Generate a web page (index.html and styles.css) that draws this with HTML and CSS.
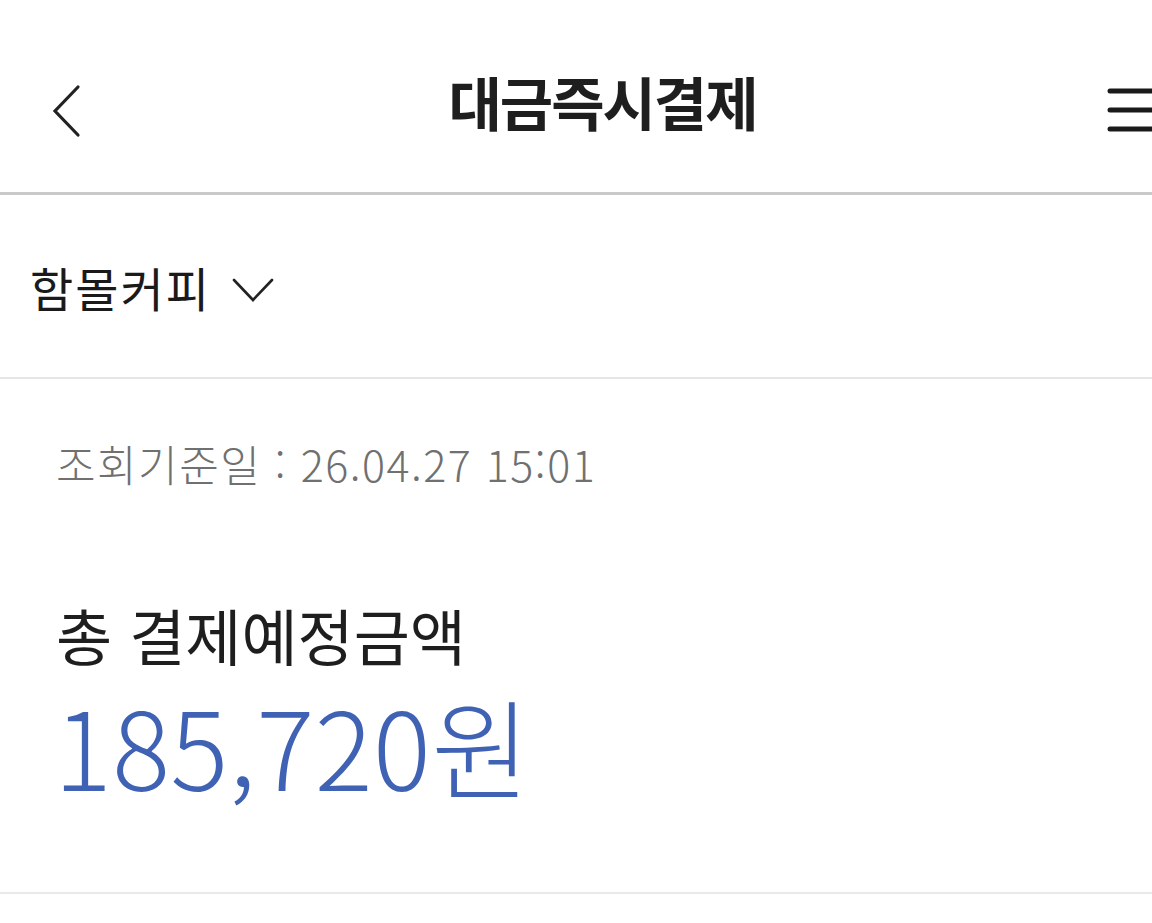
FILE: index.html
```html
<!DOCTYPE html>
<html lang="ko">
<head>
    <meta charset="UTF-8">
    <meta name="viewport" content="width=device-width, initial-scale=1.0">
    <title>대금즉시결제</title>
    <link rel="stylesheet" href="styles.css">
</head>
<body>
    <header class="top-bar">
        <button class="icon-btn back-btn" aria-label="뒤로">
            <svg width="34" height="56" viewBox="0 0 34 56">
                <polyline points="28,4 5,28 28,52" fill="none" stroke="#222" stroke-width="3.2" stroke-linecap="round" stroke-linejoin="miter"/>
            </svg>
        </button>
        <h1 class="page-title">대금즉시결제</h1>
        <button class="icon-btn menu-btn" aria-label="메뉴">
            <svg width="48" height="46" viewBox="0 0 48 46">
                <line x1="3" y1="4" x2="60" y2="4" stroke="#1a1a1a" stroke-width="5" stroke-linecap="round"/>
                <line x1="3" y1="23" x2="60" y2="23" stroke="#1a1a1a" stroke-width="5" stroke-linecap="round"/>
                <line x1="3" y1="42" x2="60" y2="42" stroke="#1a1a1a" stroke-width="5" stroke-linecap="round"/>
            </svg>
        </button>
    </header>

    <section class="store-select">
        <span class="store-name">함몰커피</span>
        <svg class="caret" width="44" height="28" viewBox="0 0 44 28">
            <polyline points="3,4 22,24 41,4" fill="none" stroke="#222" stroke-width="2.6" stroke-linecap="round"/>
        </svg>
    </section>

    <section class="summary">
        <p class="query-date">조회기준일 : 26.04.27 15:01</p>
        <div class="total">
            <p class="total-label">총 결제예정금액</p>
            <p class="total-amount">185,720원</p>
        </div>
    </section>
</body>
</html>
```

FILE: styles.css
```css
body {
    margin: 0;
    background: #fff;
    color: #222;
    font-family: "Noto Sans CJK KR", "Noto Sans", sans-serif;
    overflow: hidden;
}
.top-bar {
    display: flex;
    align-items: center;
    justify-content: space-between;
    border-bottom: 3px solid #c9c9c9;
    box-sizing: border-box;
    height: 195px;
    overflow: hidden;
}
.icon-btn {
    background: none;
    border: none;
    padding: 0;
    display: flex;
}
.back-btn {
    margin-left: 50px;
    margin-top: 30px;
}
.menu-btn {
    margin-top: 28px;
    margin-right: -3px;
}
.page-title {
    margin: 10px 0 0 14px;
    font-size: 58px;
    font-weight: 700;
    letter-spacing: -2px;
    color: #1e1e1e;
}
.store-select {
    height: 184px;
    display: flex;
    align-items: center;
    padding-left: 30px;
    gap: 20px;
    border-bottom: 2px solid #e6e6e6;
    box-sizing: border-box;
}
.store-name {
    font-size: 47px;
    color: #1a1a1a;
    letter-spacing: 2px;
}
.caret {
    margin-top: 8px;
}
.summary {
    padding: 53px 56px 0;
    border-bottom: 2px solid #e9e9e9;
    height: 515px;
    box-sizing: border-box;
}
.query-date {
    margin: 0;
    font-size: 43px;
    font-weight: 300;
    color: #707070;
    letter-spacing: 1.5px;
}
.total {
    margin-top: 104px;
}
.total-label {
    margin: 0;
    font-size: 61px;
    color: #1e1e1e;
    line-height: 1.2;
}
.total-amount {
    margin: 14px 0 0 -2px;
    font-size: 108px;
    font-weight: 300;
    color: #3f62b4;
    line-height: 1.1;
    letter-spacing: 0.5px;
}
```
